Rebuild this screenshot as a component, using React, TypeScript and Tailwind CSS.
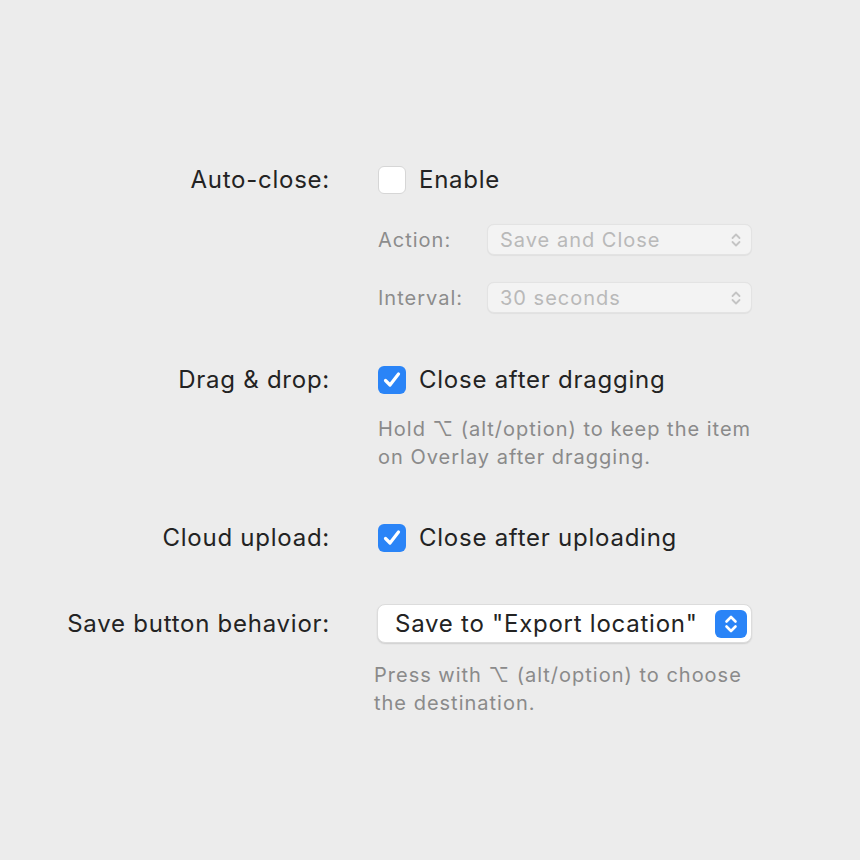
import React from "react";

const font = { fontFamily: "Inter, 'Noto Sans', sans-serif" };

function Check({ checked }: { checked: boolean }) {
  if (checked) {
    return (
      <div className="w-[28px] h-[28px] rounded-[6px] bg-[#2a84f7] flex items-center justify-center shrink-0">
        <svg width="22" height="22" viewBox="0 0 22 22">
          <path d="M4.5 11.5 L9 16 L17.5 5" fill="none" stroke="white" strokeWidth="3.2" strokeLinecap="round" strokeLinejoin="round" />
        </svg>
      </div>
    );
  }
  return <div className="w-[28px] h-[28px] rounded-[6px] bg-white border border-[#d6d6d6] shrink-0" />;
}

function Chevrons({ color }: { color: string }) {
  return (
    <svg width="12" height="18" viewBox="0 0 12 18">
      <path d="M2.5 7 L6 3.5 L9.5 7" fill="none" stroke={color} strokeWidth="1.8" strokeLinecap="round" strokeLinejoin="round" />
      <path d="M2.5 11 L6 14.5 L9.5 11" fill="none" stroke={color} strokeWidth="1.8" strokeLinecap="round" strokeLinejoin="round" />
    </svg>
  );
}

function DisabledPopup({ text }: { text: string }) {
  return (
    <div className="w-[265px] h-[31px] rounded-[7px] bg-[#f3f3f3] border border-[#e3e3e3] shadow-[0_0.5px_1px_rgba(0,0,0,0.05)] flex items-center justify-between pl-[12px] pr-[9px]">
      <span className="text-[20px] tracking-[1px] text-[#b9b9b9]">{text}</span>
      <Chevrons color="#c4c4c4" />
    </div>
  );
}

function Label({ children }: { children: React.ReactNode }) {
  return <div className="w-[330px] text-right text-[24px] tracking-[0.75px] text-[#232323] shrink-0">{children}</div>;
}

export default function App() {
  return (
    <div className="w-[860px] h-[860px] bg-[#ececec] pt-[166px]" style={font}>
      {/* Auto-close */}
      <div className="flex items-center h-[28px]">
        <Label>Auto-close:</Label>
        <div className="ml-[48px] flex items-center gap-[13px]">
          <Check checked={false} />
          <span className="text-[24px] tracking-[0.75px] text-[#232323]">Enable</span>
        </div>
      </div>

      <div className="ml-[378px] mt-[30px] flex items-center h-[31px]">
        <span className="w-[109px] text-[20px] tracking-[1px] text-[#8c8c8c]">Action:</span>
        <DisabledPopup text="Save and Close" />
      </div>
      <div className="ml-[378px] mt-[27px] flex items-center h-[31px]">
        <span className="w-[109px] text-[20px] tracking-[1px] text-[#8c8c8c]">Interval:</span>
        <DisabledPopup text="30 seconds" />
      </div>

      {/* Drag & drop */}
      <div className="flex items-center h-[28px] mt-[53px]">
        <Label>Drag &amp; drop:</Label>
        <div className="ml-[48px] flex items-center gap-[13px]">
          <Check checked={true} />
          <span className="text-[24px] tracking-[0.75px] text-[#232323]">Close after dragging</span>
        </div>
      </div>
      <div className="ml-[378px] mt-[21px] w-[420px] text-[20px] tracking-[1px] leading-[28px] text-[#8a8a8a]">
        Hold ⌥ (alt/option) to keep the item
        <br />
        on Overlay after dragging.
      </div>

      {/* Cloud upload */}
      <div className="flex items-center h-[28px] mt-[53px]">
        <Label>Cloud upload:</Label>
        <div className="ml-[48px] flex items-center gap-[13px]">
          <Check checked={true} />
          <span className="text-[24px] tracking-[0.75px] text-[#232323]">Close after uploading</span>
        </div>
      </div>

      {/* Save button behavior */}
      <div className="flex items-center h-[39px] mt-[52px]">
        <Label>Save button behavior:</Label>
        <div className="ml-[47px] w-[375px] h-[39px] rounded-[8px] bg-white border border-[#dcdcdc] shadow-[0_1px_1.5px_rgba(0,0,0,0.12)] flex items-center justify-between pl-[17px] pr-[4px]">
          <span className="text-[24px] tracking-[0.75px] text-[#232323]">Save to "Export location"</span>
          <div className="w-[32px] h-[28px] rounded-[6px] bg-[#2a84f7] flex items-center justify-center">
            <svg width="14" height="22" viewBox="0 0 14 22">
              <path d="M2.5 8.5 L7 4 L11.5 8.5" fill="none" stroke="white" strokeWidth="2.6" strokeLinecap="round" strokeLinejoin="round" />
              <path d="M2.5 13.5 L7 18 L11.5 13.5" fill="none" stroke="white" strokeWidth="2.6" strokeLinecap="round" strokeLinejoin="round" />
            </svg>
          </div>
        </div>
      </div>
      <div className="ml-[374px] mt-[18px] w-[420px] text-[20px] tracking-[1px] leading-[28px] text-[#8a8a8a]">
        Press with ⌥ (alt/option) to choose
        <br />
        the destination.
      </div>
    </div>
  );
}
